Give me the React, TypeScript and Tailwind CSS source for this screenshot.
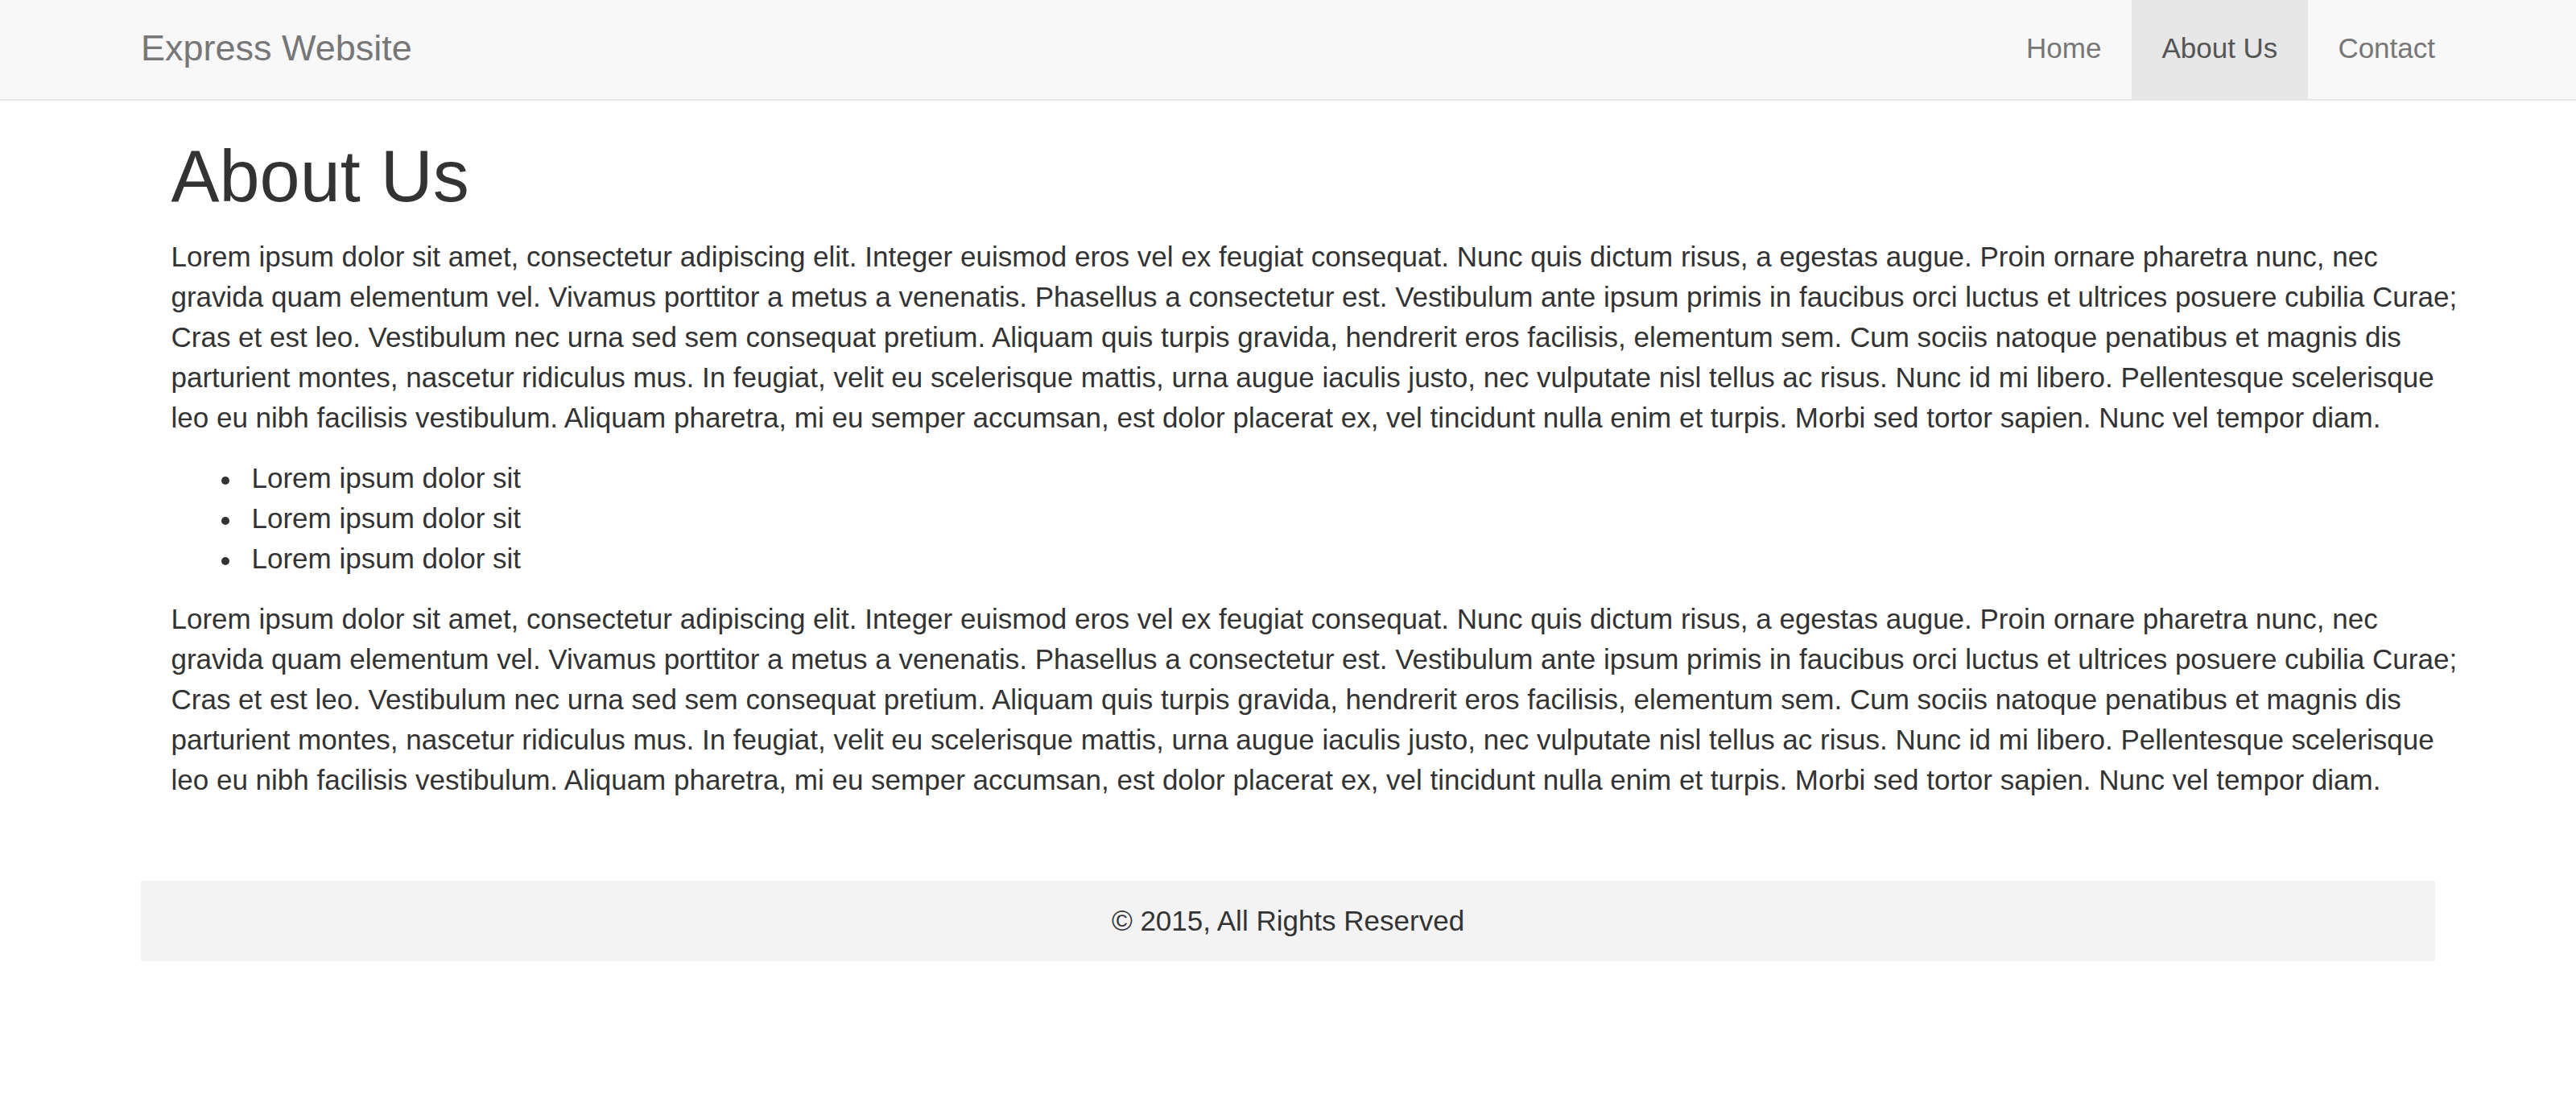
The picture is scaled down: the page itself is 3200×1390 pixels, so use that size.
const lorem =
  'Lorem ipsum dolor sit amet, consectetur adipiscing elit. Integer euismod eros vel ex feugiat consequat. Nunc quis dictum risus, a egestas augue. Proin ornare pharetra nunc, nec gravida quam elementum vel. Vivamus porttitor a metus a venenatis. Phasellus a consectetur est. Vestibulum ante ipsum primis in faucibus orci luctus et ultrices posuere cubilia Curae; Cras et est leo. Vestibulum nec urna sed sem consequat pretium. Aliquam quis turpis gravida, hendrerit eros facilisis, elementum sem. Cum sociis natoque penatibus et magnis dis parturient montes, nascetur ridiculus mus. In feugiat, velit eu scelerisque mattis, urna augue iaculis justo, nec vulputate nisl tellus ac risus. Nunc id mi libero. Pellentesque scelerisque leo eu nibh facilisis vestibulum. Aliquam pharetra, mi eu semper accumsan, est dolor placerat ex, vel tincidunt nulla enim et turpis. Morbi sed tortor sapien. Nunc vel tempor diam.';

const navLinks = [
  { label: 'Home', active: false },
  { label: 'About Us', active: true },
  { label: 'Contact', active: false },
];

const items = ['Lorem ipsum dolor sit', 'Lorem ipsum dolor sit', 'Lorem ipsum dolor sit'];

export default function App() {
  return (
    <div className="min-h-[1390px] bg-white font-['Liberation_Sans',Arial,sans-serif] text-[35px] leading-[50px] text-[#333]">
      {/* Navbar */}
      <nav className="h-[125px] border-b-[2.5px] border-[#e7e7e7] bg-[#f8f8f8]">
        <div className="mx-auto flex h-[122.5px] w-[2925px] items-start justify-between">
          <a href="#" className="pl-[37.5px] pt-[35px] text-[45px] leading-[50px] text-[#777]">
            Express Website
          </a>
          <ul className="flex h-full">
            {navLinks.map((link) => (
              <li key={link.label}>
                <a
                  href="#"
                  className={`block h-[122.5px] px-[37.5px] pt-[35px] leading-[50px] ${
                    link.active ? 'bg-[#e7e7e7] text-[#555]' : 'text-[#777]'
                  }`}
                >
                  {link.label}
                </a>
              </li>
            ))}
          </ul>
        </div>
      </nav>

      {/* Page content */}
      <div className="mx-auto w-[2925px]">
        <div className="pl-[75px]">
          <h1 className="mt-[45px] mb-[25px] text-[90px] leading-[99px] font-normal">About Us</h1>
          <p className="mb-[25px]">{lorem}</p>
          <ul className="mb-[25px] pl-[100px]">
            {items.map((item, i) => (
              <li key={i} className="relative">
                <span className="absolute left-[-37.5px] top-[23px] h-[10px] w-[10px] rounded-full bg-[#333]" />
                {item}
              </li>
            ))}
          </ul>
          <p>{lorem}</p>
        </div>

        {/* Footer */}
        <footer className="mx-[37.5px] mt-[100px] bg-[#f3f3f3] py-[25px] text-center">
          © 2015, All Rights Reserved
        </footer>
      </div>
    </div>
  );
}
